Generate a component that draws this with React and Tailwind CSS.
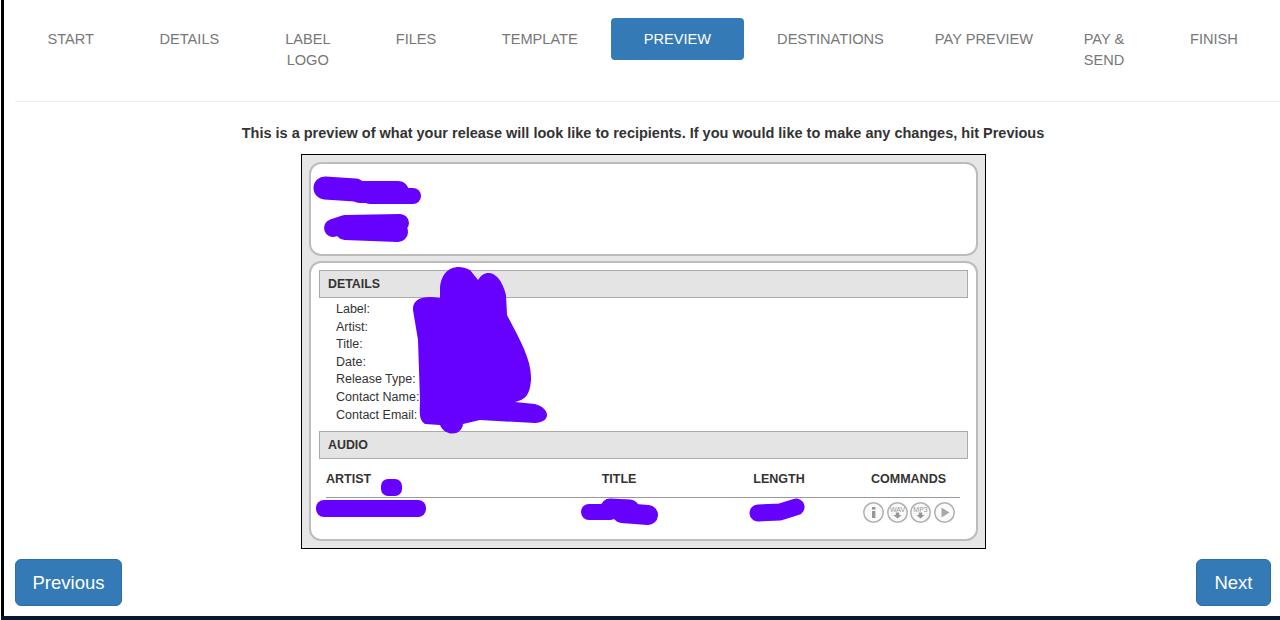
const steps = [
  { label: 'START', cls: 'px-[32.5px]' },
  { label: 'DETAILS', cls: 'px-[33px]' },
  { label: 'LABEL LOGO', cls: 'px-[33px] w-[111px]' },
  { label: 'FILES', cls: 'px-[32.5px]' },
  { label: 'TEMPLATE', cls: 'px-[33px]' },
  { label: 'PREVIEW', cls: 'px-[33px]', active: true },
  { label: 'DESTINATIONS', cls: 'px-[33px]' },
  { label: 'PAY PREVIEW', cls: 'px-[18px]' },
  { label: 'PAY & SEND', cls: 'px-[31px] w-[106px]' },
  { label: 'FINISH', cls: 'px-[33px]' },
];

const details = ['Label:', 'Artist:', 'Title:', 'Date:', 'Release Type:', 'Contact Name:', 'Contact Email:'];

const SectionHeader = ({ children }) => (
  <div className="h-[28px] flex items-center pl-2 bg-[#e4e4e4] border border-[#aaaaaa] text-[12.4px] font-bold text-[#333333]">
    {children}
  </div>
);

const Circle = ({ children }) => (
  <svg width="23" height="23" viewBox="0 0 23 23" fill="none">
    <circle cx="11.5" cy="11.5" r="9.7" stroke="#b0b0b0" strokeWidth="1.5" fill="#fafafa" />
    {children}
  </svg>
);

const TrackIcons = () => (
  <div className="flex items-center gap-[0.6px]">
    <Circle>
      <rect x="10" y="10" width="3.4" height="7" fill="#969696" />
      <rect x="10" y="6" width="3.4" height="2.6" fill="#969696" />
    </Circle>
    <Circle>
      <text x="11.5" y="10.5" textAnchor="middle" fontSize="7" fill="#969696" fontFamily="Liberation Sans, sans-serif">WAV</text>
      <path d="M9.8 11.5h3.400v2.500h2.500l-4.200 3.500l-4.200-3.500h2.500z" fill="#969696" />
    </Circle>
    <Circle>
      <text x="11.5" y="10.500" textAnchor="middle" fontSize="7" fill="#969696" fontFamily="Liberation Sans, sans-serif">MP3</text>
      <path d="M9.8 11.5h3.400v2.500h2.500l-4.200 3.500l-4.200-3.500h2.500z" fill="#969696" />
    </Circle>
    <Circle>
      <path d="M8.500 6.500l8 5l-8 5z" fill="#a8a8a8" />
    </Circle>
  </div>
);

// redaction scribbles, in page coordinates
const Scribbles = () => (
  <svg
    className="absolute top-0 left-0 pointer-events-none"
    width="683"
    height="393"
    viewBox="302 155 683 393"
    fill="none"
    stroke="#6600ff"
    strokeLinecap="round"
    strokeLinejoin="round"
  >
    <path d="M325 188L355 190" strokeWidth="23" />
    <path d="M360 192L398 192" strokeWidth="22" />
    <path d="M370 196L413 196" strokeWidth="16" />
    <path d="M333 228L345 224L400 223" strokeWidth="18" />
    <path d="M345 230L398 232" strokeWidth="20" />
    <path
      d="M440 290C440 270 455 262 470 270L478 280C485 268 500 270 506 295L507 315C520 340 532 360 531 380C530 395 525 400 515 402L535 404C550 408 552 422 535 423L480 420L463 424C462 436 445 437 440 425L425 424C418 420 420 410 420 400L418 340L413 310C412 298 425 295 440 298Z"
      fill="#6600ff"
      stroke="none"
    />
    <rect x="381" y="479" width="21" height="17" rx="7" fill="#6600ff" stroke="none" />
    <rect x="316" y="500" width="110" height="17" rx="8" fill="#6600ff" stroke="none" />
    <path d="M589 512L610 512" strokeWidth="16" />
    <path d="M610 508L630 509" strokeWidth="19" />
    <path d="M622 513L648 515" strokeWidth="20" />
    <path d="M758 513L780 512L796 507" strokeWidth="17" />
  </svg>
);

export default function App() {
  return (
    <div className="h-[620px] w-[1280px] overflow-hidden flex flex-col bg-white font-['Liberation_Sans',Arial,sans-serif]">
      <div className="flex-1 min-h-0 ml-[1px] border-l-[3px] border-black flex flex-col pl-[11px]">
        <nav className="flex items-start pt-[18px] pb-[20px] border-b border-[#eeeeee] text-[14.6px] leading-[21px]">
          {steps.map((s) => (
            <div
              key={s.label}
              className={`py-[10.5px] rounded ${s.cls} ${s.active ? 'bg-[#337ab7] text-white font-medium' : 'text-[#777777] text-center'}`}
            >
              {s.label}
            </div>
          ))}
        </nav>

        <p className="mt-[21px] text-center text-[14.5px] leading-[20px] font-bold text-[#333333] pr-[9px]">
          This is a preview of what your release will look like to recipients. If you would like to make any changes, hit Previous
        </p>

        <div className="relative mt-[11px] ml-[286px] w-[685px] h-[395px] border border-black bg-[#e6e6e6] p-[7px] flex flex-col gap-[5px] text-[12.5px] text-[#333333]">
          <div className="h-[94px] bg-white border-2 border-[#bcbcbc] rounded-[12px]" />
          <div className="flex-1 bg-white border-2 border-[#bcbcbc] rounded-[12px] px-[8px] pt-[7px]">
            <SectionHeader>DETAILS</SectionHeader>
            <div className="pl-[17px] pt-[3px] leading-[17.6px]">
              {details.map((d) => (
                <div key={d}>{d}</div>
              ))}
            </div>
            <div className="mt-[7px]">
              <SectionHeader>AUDIO</SectionHeader>
            </div>
            <div className="ml-[7px] mr-[8px] mt-[12px]">
              <div className="grid grid-cols-[213px_160px_160px_1fr] h-[27px] border-b border-[#999999] font-bold leading-[17px]">
                <div>ARTIST</div>
                <div className="text-center">TITLE</div>
                <div className="text-center">LENGTH</div>
                <div className="text-center pr-[2px]">COMMANDS</div>
              </div>
              <div className="flex justify-end pr-[4px] pt-[3px]">
                <TrackIcons />
              </div>
            </div>
          </div>
          <Scribbles />
        </div>

        <div className="mt-[10px] flex justify-between pr-[9px]">
          <button className="h-[47px] w-[107px] rounded-md bg-[#337ab7] border border-[#2e6da4] text-white text-[18.5px] font-medium">
            Previous
          </button>
          <button className="h-[47px] w-[75px] rounded-md bg-[#337ab7] border border-[#2e6da4] text-white text-[18.5px] font-medium">
            Next
          </button>
        </div>
      </div>
      <div className="h-[4px] ml-[1px] bg-[#06182a]" />
    </div>
  );
}
